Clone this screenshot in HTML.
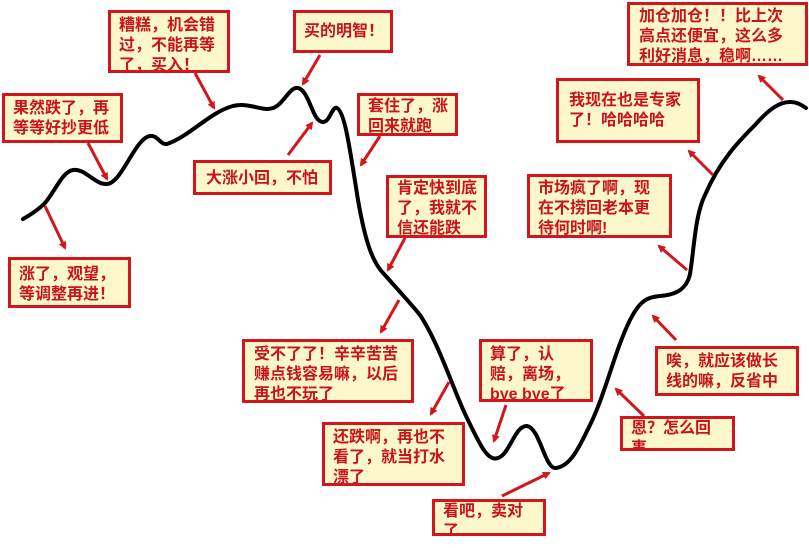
<!DOCTYPE html>
<html><head><meta charset="utf-8"><style>
html,body{margin:0;padding:0;background:#fff;}
body{width:809px;height:548px;position:relative;overflow:hidden;font-family:"Liberation Sans","Noto Sans CJK SC",sans-serif;}
.b{position:absolute;box-sizing:border-box;background:#fdf8cc;border:3px solid #d2161c;color:#c8141a;font-size:16px;line-height:20px;font-weight:bold;padding:3px 0 0 8px;white-space:nowrap;overflow:hidden;}
svg{position:absolute;left:0;top:0;}
</style></head><body>
<svg width="809" height="548" viewBox="0 0 809 548">
<defs><marker id="a" markerWidth="8" markerHeight="8" refX="6" refY="4" orient="auto" markerUnits="userSpaceOnUse"><path d="M0,0 L8,4 L0,8 z" fill="#d2161c"/></marker></defs>
<path d="M23,219 C32,214 40,208 45,203 C56,190 62,172 73,170 C85,168 95,185 107,184 C122,183 135,138 150,136 C158,135 160,145 167,144 C190,136 210,112 233,106 C250,102 262,112 273,108 C284,104 290,86 298,88 C310,91 312,122 323,122 C330,122 332,106 337,108 C345,112 350,150 358,200 C365,240 372,262 384,274 C400,292 412,305 420,315 C440,345 455,395 468,420 C480,445 488,462 498,458 C510,454 515,425 527,426 C540,428 545,470 556,468 C570,466 578,450 590,425 C605,395 615,350 630,320 C640,300 648,297 660,296 C672,295 686,292 690,274 C694,250 695,215 705,195 C720,160 740,140 755,125 C770,108 780,102 790,102 C798,102 803,106 806,108" fill="none" stroke="#000" stroke-width="4" stroke-linecap="round"/>
<g stroke="#d2161c" stroke-width="3" fill="none" marker-end="url(#a)">
<line x1="45" y1="206" x2="65" y2="248"/>
<line x1="88" y1="143" x2="107" y2="179"/>
<line x1="195" y1="73" x2="214" y2="108"/>
<line x1="320" y1="55" x2="303" y2="84"/>
<line x1="288" y1="155" x2="312" y2="123"/>
<line x1="380" y1="136" x2="361" y2="165"/>
<line x1="405" y1="238" x2="388" y2="270"/>
<line x1="399" y1="300" x2="381" y2="332"/>
<line x1="449" y1="382" x2="431" y2="414"/>
<line x1="506" y1="405" x2="494" y2="441"/>
<line x1="502" y1="496" x2="549" y2="473"/>
<line x1="644" y1="416" x2="616" y2="389"/>
<line x1="676" y1="340" x2="653" y2="316"/>
<line x1="687" y1="270" x2="659" y2="246"/>
<line x1="713" y1="175" x2="689" y2="151"/>
<line x1="783" y1="100" x2="759" y2="76"/>
</g>
</svg>
<div class="b" style="left:2px;top:93px;width:121px;height:50px;">果然跌了，再<br>等等好抄更低</div>
<div class="b" style="left:108px;top:10px;width:122px;height:63px;">糟糕，机会错<br>过，不能再等<br>了，买入！</div>
<div class="b" style="left:293px;top:10px;width:100px;height:43px;padding-top:9px;">买的明智！</div>
<div class="b" style="left:357px;top:93px;width:101px;height:43px;padding-top:1px;">套住了，涨<br>回来就跑</div>
<div class="b" style="left:193px;top:160px;width:139px;height:35px;padding-top:6px;padding-left:10px;">大涨小回，不怕</div>
<div class="b" style="left:386px;top:175px;width:101px;height:63px;padding-top:1px;">肯定快到底<br>了，我就不<br>信还能跌</div>
<div class="b" style="left:8px;top:257px;width:123px;height:51px;padding-top:5px;">涨了，观望，<br>等调整再进！</div>
<div class="b" style="left:627px;top:2px;width:181px;height:64px;padding-top:2px;padding-left:9px;">加仓加仓！！比上次<br>高点还便宜，这么多<br>利好消息，稳啊……</div>
<div class="b" style="left:556px;top:78px;width:144px;height:65px;padding-top:10px;padding-left:10px;">我现在也是专家<br>了！哈哈哈哈</div>
<div class="b" style="left:527px;top:174px;width:145px;height:64px;padding-top:2px;">市场疯了啊，现<br>在不捞回老本更<br>待何时啊!</div>
<div class="b" style="left:242px;top:339px;width:172px;height:64px;padding-top:3px;padding-left:9px;">受不了了！辛辛苦苦<br>赚点钱容易嘛，以后<br>再也不玩了</div>
<div class="b" style="left:322px;top:422px;width:143px;height:64px;padding-top:3px;">还跌啊，再也不<br>看了，就当打水<br>漂了</div>
<div class="b" style="left:479px;top:339px;width:114px;height:63px;padding-top:3px;">算了，认<br>赔，离场，<br>bye bye了</div>
<div class="b" style="left:432px;top:499px;width:114px;height:37px;padding-top:0;">看吧，卖对<br>了</div>
<div class="b" style="left:620px;top:416px;width:115px;height:35px;padding-top:0;">恩？怎么回<br>事</div>
<div class="b" style="left:655px;top:346px;width:144px;height:50px;padding-top:3px;">唉，就应该做长<br>线的嘛，反省中</div>
</body></html>
